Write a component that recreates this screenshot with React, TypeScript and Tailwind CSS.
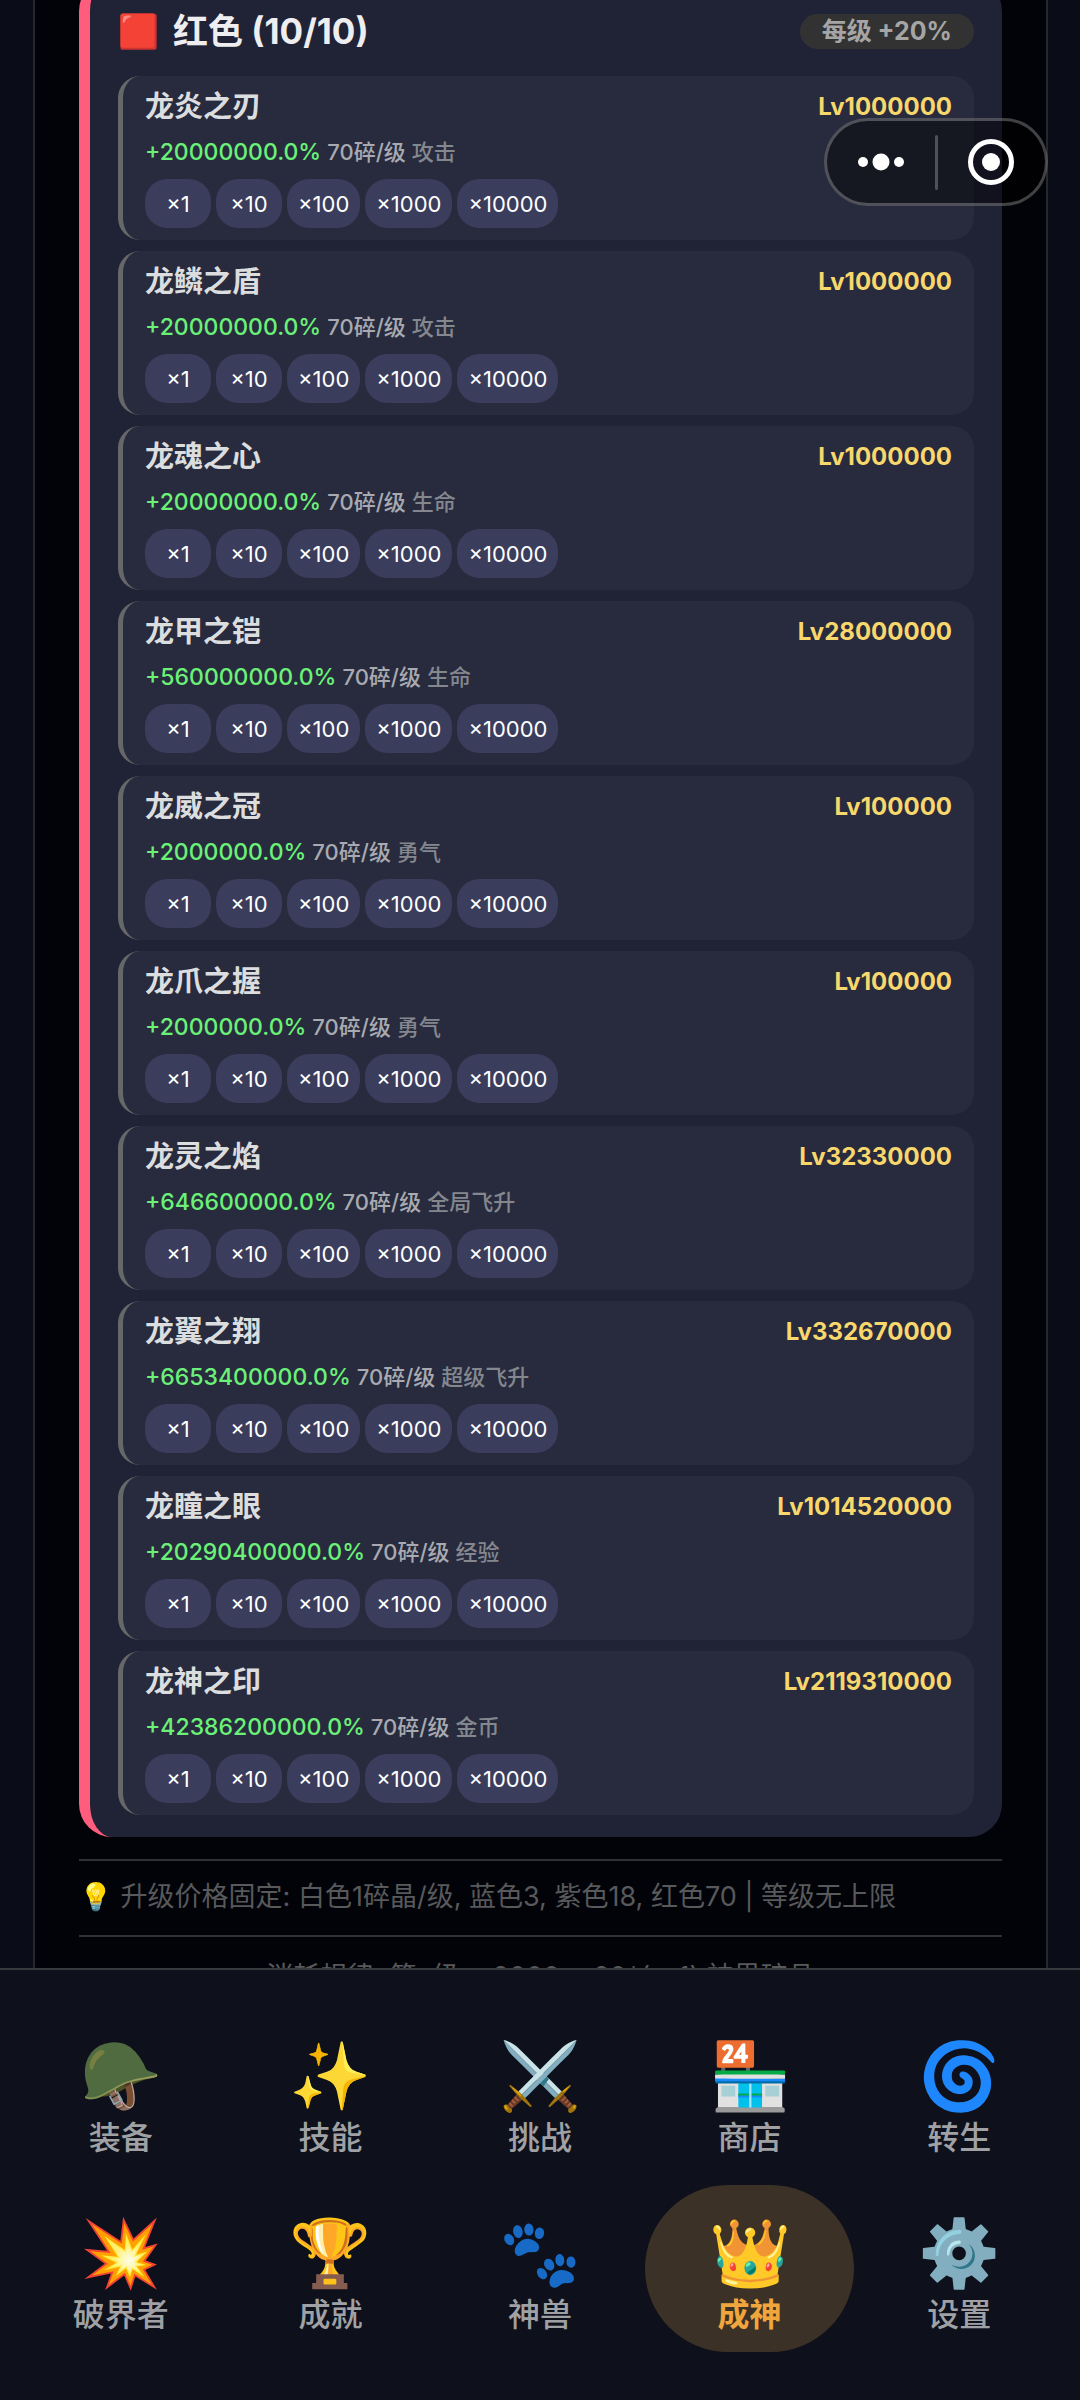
import { useState } from 'react';
import clsx from 'clsx';

interface Relic {
  name: string;
  level: string;
  bonus: string;
  stat: string;
}

const relics: Relic[] = [
  { name: '龙炎之刃', level: '1000000', bonus: '20000000.0', stat: '攻击' },
  { name: '龙鳞之盾', level: '1000000', bonus: '20000000.0', stat: '攻击' },
  { name: '龙魂之心', level: '1000000', bonus: '20000000.0', stat: '生命' },
  { name: '龙甲之铠', level: '28000000', bonus: '560000000.0', stat: '生命' },
  { name: '龙威之冠', level: '100000', bonus: '2000000.0', stat: '勇气' },
  { name: '龙爪之握', level: '100000', bonus: '2000000.0', stat: '勇气' },
  { name: '龙灵之焰', level: '32330000', bonus: '646600000.0', stat: '全局飞升' },
  { name: '龙翼之翔', level: '332670000', bonus: '6653400000.0', stat: '超级飞升' },
  { name: '龙瞳之眼', level: '1014520000', bonus: '20290400000.0', stat: '经验' },
  { name: '龙神之印', level: '2119310000', bonus: '42386200000.0', stat: '金币' },
];

const steps = [1, 10, 100, 1000, 10000];

const tabs = [
  { icon: '🪖', label: '装备' },
  { icon: '✨', label: '技能' },
  { icon: '⚔️', label: '挑战' },
  { icon: '🏪', label: '商店' },
  { icon: '🌀', label: '转生' },
  { icon: '💥', label: '破界者' },
  { icon: '🏆', label: '成就' },
  { icon: '🐾', label: '神兽' },
  { icon: '👑', label: '成神' },
  { icon: '⚙️', label: '设置' },
];

function RelicCard({ relic }: { relic: Relic }) {
  return (
    <li className="rounded-[22px] border-l-[5px] border-[#666769] bg-[#272b3d] px-[22px] pt-[13px] pb-3">
      <div className="flex items-center justify-between">
        <h3 className="text-[29px] leading-9 font-bold text-[#dcdddf]">{relic.name}</h3>
        <span className="text-[24px] leading-9 font-bold text-[#f8d76c]">Lv{relic.level}</span>
      </div>
      <div className="mt-[7px] flex items-center gap-[6px] text-[22px] leading-10 font-medium">
        <span className="text-[23px] text-[#6bf178]">+{relic.bonus}%</span>
        <span className="text-[#a9aab1]">70碎/级</span>
        <span className="text-[#85878f]">{relic.stat}</span>
      </div>
      <div className="mt-[7px] flex gap-[5px]">
        {steps.map((n) => (
          <button
            key={n}
            type="button"
            className="h-[49px] min-w-[66px] rounded-[22px] bg-[#3b3d5c] px-[11px] text-[22px] leading-7 text-white"
          >
            ×{n}
          </button>
        ))}
      </div>
    </li>
  );
}

function Capsule() {
  return (
    <div className="absolute top-[118px] right-8 flex h-[88px] w-56 items-center rounded-full border-[3px] border-white/25 bg-black/45">
      <button type="button" aria-label="更多" className="flex flex-1 justify-center">
        <svg width="48" height="20" viewBox="0 0 48 20" fill="#fff">
          <circle cx="6" cy="10" r="5" />
          <circle cx="24" cy="10" r="8.5" />
          <circle cx="42" cy="10" r="5" />
        </svg>
      </button>
      <span className="h-[55px] w-[3px] rounded-full bg-white/25" />
      <button type="button" aria-label="关闭" className="flex flex-1 justify-center">
        <svg width="48" height="48" viewBox="0 0 48 48">
          <circle cx="24" cy="24" r="20.5" fill="none" stroke="#fff" strokeWidth="5" />
          <circle cx="24" cy="24" r="9" fill="#fff" />
        </svg>
      </button>
    </div>
  );
}

export default function App() {
  const [active, setActive] = useState('成神');

  return (
    <div className="relative flex h-screen flex-col overflow-hidden bg-[#0a0c18] font-['Inter','Noto_Sans_CJK_SC',sans-serif]">
      <main className="min-h-0 flex-1 overflow-hidden pr-8 pl-[33px]">
        <div className="h-full overflow-hidden border-x-2 border-[#27282b] bg-[#020308] px-11">
          {/* list is scrolled, the section's top edge sits above the viewport */}
          <section className="-mt-[22px] rounded-[33px] border-l-[11px] border-[#ff5d7d] bg-[#202235] px-7 py-[22px]">
            <header className="flex h-[62px] items-center justify-between">
              <h2 className="flex items-center gap-[14px] text-[35px] leading-10 font-bold text-[#eeeef0]">
                <span className="text-[33px]">🟥</span>
                <span>红色 (10/10)</span>
              </h2>
              <span className="rounded-full bg-[#323232] px-[22px] text-[25px] leading-[35px] font-bold text-[#a5a5a5]">
                每级 +20%
              </span>
            </header>
            <ul className="mt-[14px] flex flex-col gap-[11px]">
              {relics.map((relic) => (
                <RelicCard key={relic.name} relic={relic} />
              ))}
            </ul>
          </section>

          <p className="mt-[22px] border-y-2 border-[#2f3033] pt-4 pb-[18px] text-[27px] leading-10 text-[#58595b]">
            💡 升级价格固定: 白色1碎晶/级, 蓝色3, 紫色18, 红色70 | 等级无上限
          </p>
          <p className="mt-5 text-center text-[27px] leading-10 text-[#58595b]">
            消耗规律: 第n级 = 2000 + 20*(n-1) 神界碎晶
          </p>
        </div>
      </main>

      <nav className="grid grid-cols-5 gap-y-[10px] border-t-2 border-[#37393f] bg-[#0e111c] px-4 pt-[38px] pb-12">
        {tabs.map(({ icon, label }) => (
          <button
            key={label}
            type="button"
            onClick={() => setActive(label)}
            className={clsx(
              'flex h-[167px] flex-col items-center gap-[5px] rounded-full pt-[29px] text-[32px] leading-10',
              active === label ? 'bg-[#3c3126] font-bold text-[#f0a63c]' : 'font-medium text-[#a0a1a5]',
            )}
          >
            <span className="text-[66px] leading-[76px] font-normal">{icon}</span>
            <span>{label}</span>
          </button>
        ))}
      </nav>

      <Capsule />
    </div>
  );
}
